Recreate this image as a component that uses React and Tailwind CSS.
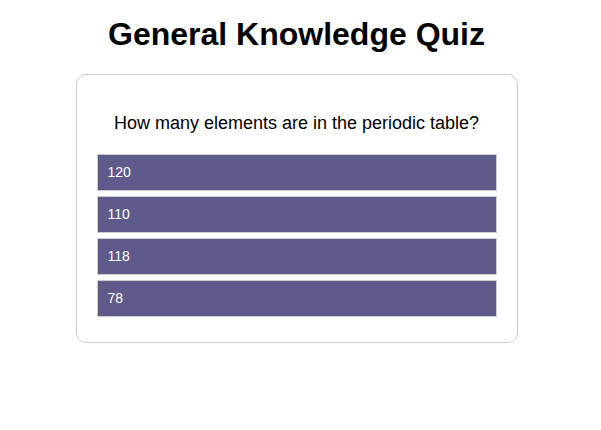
const answers = ["120", "110", "118", "78"];

export default function App() {
  return (
    <main className="min-h-screen bg-white pr-2 pt-3 font-['Liberation_Sans',Arial,sans-serif] text-black">
      <h1 className="text-center text-[32px] leading-[44px] font-bold">General Knowledge Quiz</h1>
      <section className="mx-auto mt-[18px] max-w-[442px] rounded-[10px] border border-[#cccccc] px-5 pt-[38px] pb-5">
        <h2 className="text-center text-lg leading-[21px]">How many elements are in the periodic table?</h2>
        <div className="mt-5 mb-[5px] flex flex-col gap-[5px]">
          {answers.map((answer) => (
            <button
              key={answer}
              type="button"
              className="w-full border border-[#cccccc] bg-[#5e5a8b] p-2.5 text-left text-sm leading-[15px] text-white"
            >
              {answer}
            </button>
          ))}
        </div>
      </section>
    </main>
  );
}
